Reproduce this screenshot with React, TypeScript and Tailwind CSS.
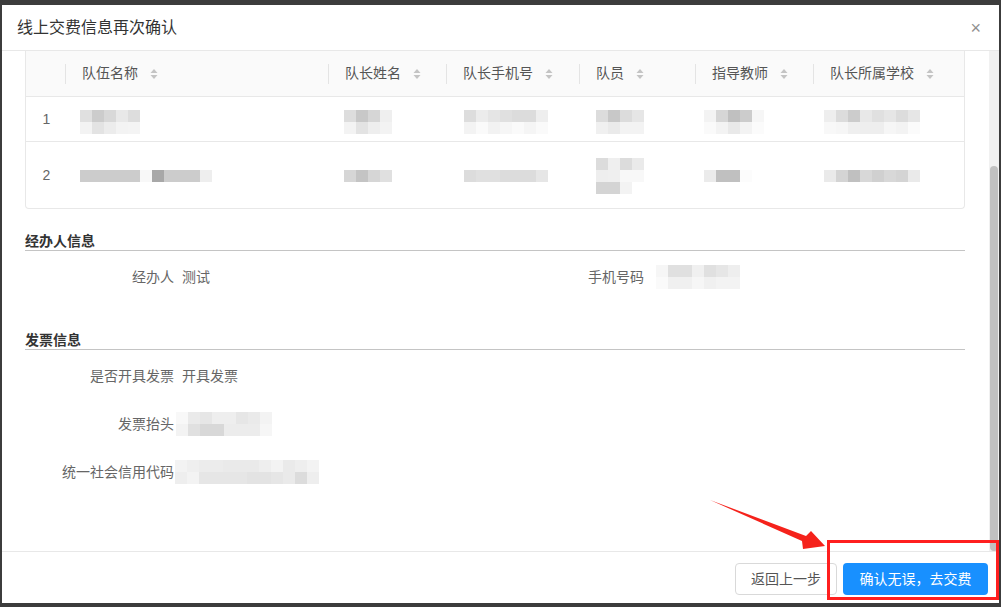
import React from "react";

type Cells = string[][];

function Mosaic({ cells, className = "" }: { cells: Cells; className?: string }) {
  return (
    <div className={`flex flex-col ${className}`}>
      {cells.map((row, i) => (
        <div key={i} className="flex">
          {row.map((v, j) => (
            <div key={j} className="h-[12px] w-[12px]" style={{ background: `#${v}${v}${v}` }} />
          ))}
        </div>
      ))}
    </div>
  );
}

function SortIcon() {
  return (
    <svg width="8" height="12" viewBox="0 0 8 12" className="ml-[12px]">
      <polygon points="4,1 7.5,5 0.5,5" fill="#c4c4c4" />
      <polygon points="0.5,7 7.5,7 4,11" fill="#c4c4c4" />
    </svg>
  );
}

const columns = ["队伍名称", "队长姓名", "队长手机号", "队员", "指导教师", "队长所属学校"];
const grid = "grid grid-cols-[39px_263px_118px_133px_116px_118px_1fr]";

const rows: { h: string; cells: { m: Cells; ml: string }[] }[] = [
  {
    h: "h-[45px]",
    cells: [
      { m: [["e0", "cc", "d8", "e8", "dd"], ["f3", "e3", "ec", "f3", "f4"]], ml: "ml-[15px] mt-[6px]" },
      { m: [["dd", "c8", "d6", "ef"], ["f3", "e3", "ee", "f3"]], ml: "ml-[16px] mt-[6px]" },
      { m: [["dd", "ec", "e5", "e0", "dc", "dc", "ee"], ["f3", "fa", "f2", "f6", "fa", "f5", "fa"]], ml: "ml-[18px] mt-[6px]" },
      { m: [["dc", "c8", "dc", "e6"], ["f0", "ea", "f3", "f3"]], ml: "ml-[17px] mt-[6px]" },
      { m: [["f3", "d6", "c0", "cc", "f6"], ["fa", "f3", "e9", "f3", "fb"]], ml: "ml-[9px] mt-[6px]" },
      { m: [["ee", "dc", "cc", "e8", "e0", "e6", "dc", "e6"], ["f8", "f6", "ef", "ee", "ee", "f6", "f3", "fb"]], ml: "ml-[11px] mt-[6px]" },
    ],
  },
  {
    h: "h-[66px]",
    cells: [
      { m: [["cc", "cc", "cc", "cc", "cc", "f8", "a8", "cc", "cc", "cc", "ee"]], ml: "ml-[15px] mt-[2px]" },
      { m: [["d6", "c4", "d6", "e0"]], ml: "ml-[16px] mt-[2px]" },
      { m: [["dc", "e0", "e0", "dc", "dc", "dc", "e6"]], ml: "ml-[18px] mt-[2px]" },
      { m: [["dc", "ef", "dc", "ea"], ["ee", "ef", "f8", "f8"], ["d4", "d4", "f3", "ff"]], ml: "ml-[17px] mt-[2px]" },
      { m: [["eb", "c0", "c0", "fc"]], ml: "ml-[9px] mt-[2px]" },
      { m: [["ea", "d4", "c0", "d8", "d0", "d8", "d4", "ea"]], ml: "ml-[11px] mt-[2px]" },
    ],
  },
];

function SectionTitle({ children, className = "" }: { children: React.ReactNode; className?: string }) {
  return (
    <div className={`border-b border-[#c4c4c4] pb-[1px] text-[14px] font-bold leading-[16px] text-[#333] ${className}`}>
      {children}
    </div>
  );
}

function Label({ children }: { children: React.ReactNode }) {
  return <div className="w-[149px] shrink-0 text-right text-[14px] text-[#666]">{children}</div>;
}

export default function App() {
  return (
    <div
      className="relative h-[607px] w-[1001px] overflow-hidden bg-[#3c3c3c] pb-[4px] pl-[2px] pr-[2px] pt-[5px]"
      style={{ fontFamily: '"Liberation Sans", "Noto Sans CJK SC", sans-serif' }}
    >
      <div className="flex h-full flex-col bg-white">
        {/* header */}
        <div className="flex h-[46px] shrink-0 items-center justify-between border-b border-[#e8e8e8] pl-[15px] pr-[18px]">
          <span className="text-[16px] text-[#333]">线上交费信息再次确认</span>
          <span className="text-[18px] leading-none text-[#909090]">×</span>
        </div>

        {/* body */}
        <div className="flex min-h-0 flex-1">
          <div className="min-w-0 flex-1 pl-[23px] pr-[24px]">
            <div className="rounded-b-[4px] border border-t-0 border-[#e8e8e8]">
              <div className={`${grid} h-[46px] border-b border-[#e8e8e8] bg-[#fafafa]`}>
                <div />
                {columns.map((c) => (
                  <div key={c} className="flex items-center">
                    <div className="flex h-[20px] items-center border-l border-[#e4e4e4] pl-[16px] text-[14px] text-[#555]">
                      {c}
                      <SortIcon />
                    </div>
                  </div>
                ))}
              </div>
              {rows.map((r, i) => (
                <div key={i} className={`${grid} ${r.h} ${i === 0 ? "border-b border-[#e8e8e8]" : ""}`}>
                  <div className="flex items-center justify-center pl-[2px] text-[14px] text-[#666]">{i + 1}</div>
                  {r.cells.map((c, j) => (
                    <div key={j} className="flex items-center">
                      <Mosaic cells={c.m} className={c.ml} />
                    </div>
                  ))}
                </div>
              ))}
            </div>

            <SectionTitle className="mt-[24px]">经办人信息</SectionTitle>
            <div className="mt-[2px] grid h-[48px] grid-cols-2 items-center">
              <div className="flex items-center">
                <Label>经办人</Label>
                <span className="ml-[8px] text-[14px] text-[#666]">测试</span>
              </div>
              <div className="flex items-center">
                <Label>手机号码</Label>
                <Mosaic
                  className="ml-[12px]"
                  cells={[["f6", "e0", "e0", "f0", "e0", "e6", "ee"], ["fa", "f0", "f0", "f6", "f0", "f3", "f3"]]}
                />
              </div>
            </div>

            <SectionTitle className="mt-[31px]">发票信息</SectionTitle>
            <div className="mt-[2px] flex flex-col">
              <div className="flex h-[48px] items-center">
                <Label>是否开具发票</Label>
                <span className="ml-[8px] text-[14px] text-[#666]">开具发票</span>
              </div>
              <div className="flex h-[48px] items-center">
                <Label>发票抬头</Label>
                <Mosaic
                  className="ml-[2px]"
                  cells={[["f8", "ea", "e6", "ee", "ee", "e6", "ea", "f3"], ["f3", "e0", "d8", "d8", "ec", "ec", "ec", "f6"]]}
                />
              </div>
              <div className="flex h-[48px] items-center">
                <Label>统一社会信用代码</Label>
                <Mosaic
                  className="ml-[1px]"
                  cells={[
                    ["f3", "ef", "ec", "ec", "ea", "ea", "ea", "ee", "f3", "ea", "ee", "f3"],
                    ["ee", "f3", "e6", "e6", "e6", "e6", "e3", "e3", "e6", "ea", "dc", "ee"],
                  ]}
                />
              </div>
            </div>
          </div>

          {/* scrollbar */}
          <div className="flex w-[10px] shrink-0 flex-col bg-[#f1f1f1]">
            <div className="h-[115px] shrink-0" />
            <div className="mx-[1px] flex-1 rounded-[4px] bg-[#c1c1c1]" />
          </div>
        </div>

        {/* footer */}
        <div className="flex h-[52px] shrink-0 items-start justify-end gap-[6px] border-t border-[#e8e8e8] pr-[11px] pt-[11px]">
          <button className="h-[32px] w-[102px] rounded-[4px] border border-[#d9d9d9] bg-white text-[14px] text-[#555]">
            返回上一步
          </button>
          <button className="h-[32px] w-[145px] rounded-[4px] bg-[#1890ff] text-[14px] text-white">
            确认无误，去交费
          </button>
        </div>
      </div>

      {/* red annotation */}
      <div className="absolute left-[827px] top-[540px] h-[60px] w-[172px] border-[3px] border-[#ff1f1f]" />
      <svg className="absolute left-[700px] top-[490px]" width="135" height="70" viewBox="0 0 135 70">
        <polygon points="10,10 106,46 111,41 125,56 103,59 102,51" fill="#f5221b" />
      </svg>
    </div>
  );
}
